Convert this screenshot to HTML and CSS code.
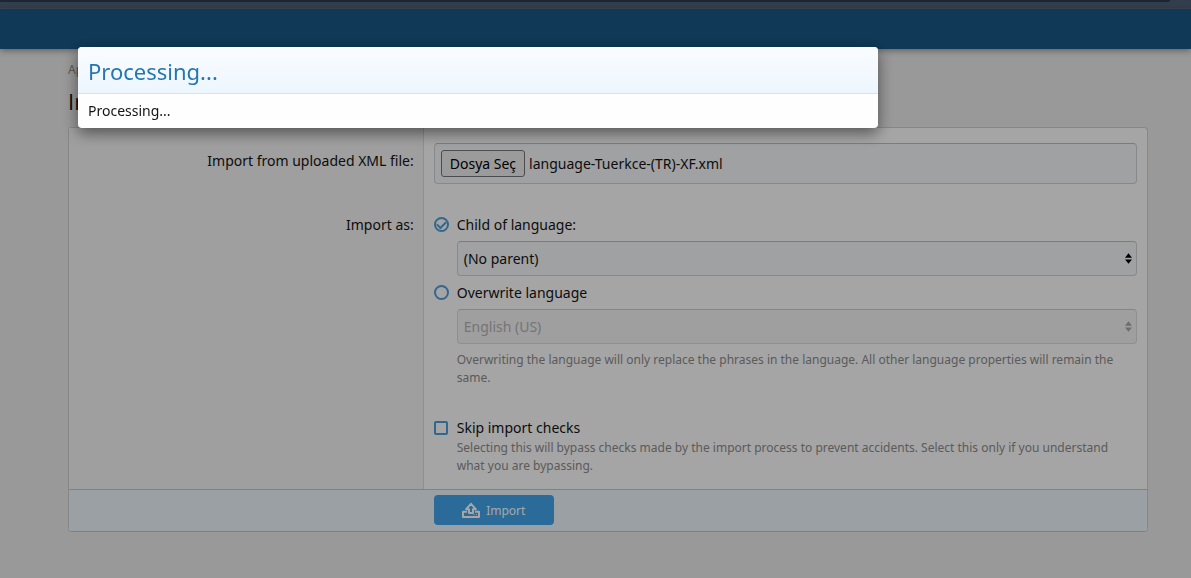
FILE: index.html
```html
<!DOCTYPE html>
<html lang="en">
<head>
<meta charset="utf-8">
<title>Import language</title>
<link rel="stylesheet" href="styles.css">
</head>
<body>
<div class="topEdge"><div class="topEdge-bar"></div></div>
<header class="header"></header>
<main class="content">
  <nav class="breadcrumb"><a href="#">Ap</a></nav>
  <h1 class="title">In</h1>
  <form class="block">
    <div class="row">
      <div class="row-label row-label--input"><label for="upload">Import from uploaded XML file:</label></div>
      <div class="row-main">
        <div class="file">
          <input class="file-native" type="file" id="upload" tabindex="-1">
          <button class="file-button" type="button">Dosya Seç</button>
          <span class="file-name">language-Tuerkce-(TR)-XF.xml</span>
        </div>
      </div>
    </div>
    <div class="row">
      <div class="row-label" id="importAs">Import as:</div>
      <div class="row-main" role="radiogroup" aria-labelledby="importAs">
        <label class="choice"><input class="mark mark--radio" type="radio" name="as" checked>Child of language:</label>
        <div class="select">
          <select class="select-input" aria-label="Child of language"><option>(No parent)</option></select>
          <svg class="select-arrows" viewBox="0 0 8 12"><path d="M4 0l4 5H0zM4 12l4-5H0z"/></svg>
        </div>
        <label class="choice"><input class="mark mark--radio" type="radio" name="as">Overwrite language</label>
        <div class="select select--disabled">
          <select class="select-input" aria-label="Overwrite language" disabled><option>English (US)</option></select>
          <svg class="select-arrows" viewBox="0 0 8 12"><path d="M4 0l4 5H0zM4 12l4-5H0z"/></svg>
        </div>
        <p class="hint">Overwriting the language will only replace the phrases in the language. All other language properties will remain the same.</p>
      </div>
    </div>
    <div class="row">
      <div class="row-label"></div>
      <div class="row-main row-main--last">
        <label class="choice"><input class="mark mark--check" type="checkbox">Skip import checks</label>
        <p class="hint">Selecting this will bypass checks made by the import process to prevent accidents. Select this only if you understand what you are bypassing.</p>
      </div>
    </div>
    <div class="submit">
      <button class="button" type="button">
        <svg class="button-icon" viewBox="0 0 18 16"><path d="M7 11V7.200H4.200L9 1.800l4.800 5.400H11V11zM5 9.800H1V15h16V9.800h-4"/><path class="button-iconDots" d="M11.500 12.600h1M14 12.600h1"/></svg>
        <span>Import</span>
      </button>
    </div>
  </form>
</main>
<div class="overlay">
  <section class="dialog" role="dialog" aria-labelledby="dialogTitle">
    <h2 class="dialog-title" id="dialogTitle">Processing...</h2>
    <div class="dialog-body">Processing...</div>
  </section>
</div>
</body>
</html>
```
FILE: styles.css
```css
* { box-sizing: border-box; }
body {
  margin: 0;
  min-height: 100vh;
  background: #ebebeb;
  color: #141414;
  font: 14px/21px "Noto Sans", "Segoe UI", sans-serif;
}
h1, h2, p { margin: 0; font-weight: 400; }
button, select { font: inherit; color: inherit; }

.topEdge { height: 9px; background: #4e6078; border-bottom: 1px solid #5d6b78; }
.topEdge-bar { height: 2px; margin-right: 21px; background: #2c3a50; border-bottom-right-radius: 2px; }
.header { height: 40px; background: #185886; box-shadow: 0 2px 6px rgba(0, 0, 0, .35); }

.content { padding: 10px 43px 40px 68px; }
.breadcrumb { font-size: 12px; }
.breadcrumb a { color: #8c8c8c; text-decoration: none; }
.title { padding: 6px 0 11px; font-family: "Open Sans", sans-serif; font-size: 22px; line-height: 30px; }

.block { border: 1px solid #cdcfd2; border-bottom-color: #c0c4c8; border-radius: 4px; background: #fefefe; }
.row { display: grid; grid-template-columns: calc(33% - 1px) 1fr; }
.row-label {
  padding: 15px 9px;
  border-right: 1px solid #dcdcdc;
  background: #f5f5f5;
  text-align: right;
}
.row-label--input { padding-top: 22px; }
.row-main { padding: 15px 10px; min-width: 0; }
.row-main--last { padding-bottom: 14px; }

.file {
  display: flex;
  align-items: center;
  gap: 4px;
  height: 41px;
  padding: 0 6px;
  border: 1px solid #d0d2d5;
  border-top-color: #bdbfc2;
  border-radius: 4px;
  background: #f6f8fb;
}
.file-native { position: absolute; width: 1px; height: 1px; opacity: 0; }
.file-button {
  height: 27px;
  padding: 0 8px;
  border: 1px solid #767676;
  border-radius: 3px;
  background: #efefef;
  color: #000;
}

.choice { display: flex; align-items: center; gap: 8px; }
.mark {
  appearance: none;
  display: grid;
  place-items: center;
  flex: none;
  width: 15px;
  height: 15px;
  margin: 0;
  border: 2px solid #4a9fde;
}
.mark--radio { border-radius: 50%; }
.mark--radio:checked::before {
  content: "";
  width: 7px;
  height: 4px;
  margin-bottom: 2px;
  border: solid #4a9fde;
  border-width: 0 0 2px 2px;
  transform: rotate(-45deg);
}
.mark--check { width: 14px; height: 14px; margin-right: 1px; border-radius: 2px; }

.select { position: relative; margin: 6px 0 6px 23px; }
.select-input {
  appearance: none;
  display: block;
  width: 100%;
  height: 35px;
  padding: 0 24px 0 6px;
  border: 1px solid #d0d2d5;
  border-top-color: #bdbfc2;
  border-radius: 4px;
  background: #f6f8fb;
  opacity: 1;
}
.select-arrows { position: absolute; top: 12px; right: 5px; width: 7px; height: 11px; }
.select--disabled .select-input { color: #b4b4b4; background: #f5f5f5; border-color: #dcdcdc; border-top-color: #cdcdcd; }
.select--disabled .select-arrows { fill: #a8a8a8; }

.hint { margin-left: 23px; padding: 1px 8px 0 0; color: #8c8c8c; font-size: 12px; line-height: 18px; }

.submit {
  padding: 5px 10px 6px calc(33% + 9px);
  border-top: 1px solid #c4c8cc;
  border-radius: 0 0 3px 3px;
  background: #eff6fc;
}
.button {
  display: flex;
  align-items: center;
  justify-content: center;
  gap: 6px;
  width: 120px;
  height: 30px;
  padding: 0;
  border: 0;
  border-radius: 4px;
  background: #42a5eb;
  color: #fff;
  font-size: 12px;
}
.button-icon { width: 18px; height: 16px; fill: none; stroke: currentColor; stroke-width: 2; stroke-linejoin: round; }
.button-iconDots { stroke-width: 1; }

.overlay { position: fixed; inset: 0; padding: 47px 78px; background: rgba(0, 0, 0, .35); }
.dialog {
  max-width: 800px;
  border-radius: 4px;
  background: #fefefe;
  box-shadow: 0 5px 15px rgba(0, 0, 0, .5);
  overflow: hidden;
}
.dialog-title {
  padding: 9px 10px 7px;
  border-bottom: 1px solid #dbe1e6;
  background: linear-gradient(#fafcff, #edf6fe);
  color: #2577b1;
  font-size: 22px;
  line-height: 30px;
}
.dialog-body { padding: 6px 10px 7px; }
```
